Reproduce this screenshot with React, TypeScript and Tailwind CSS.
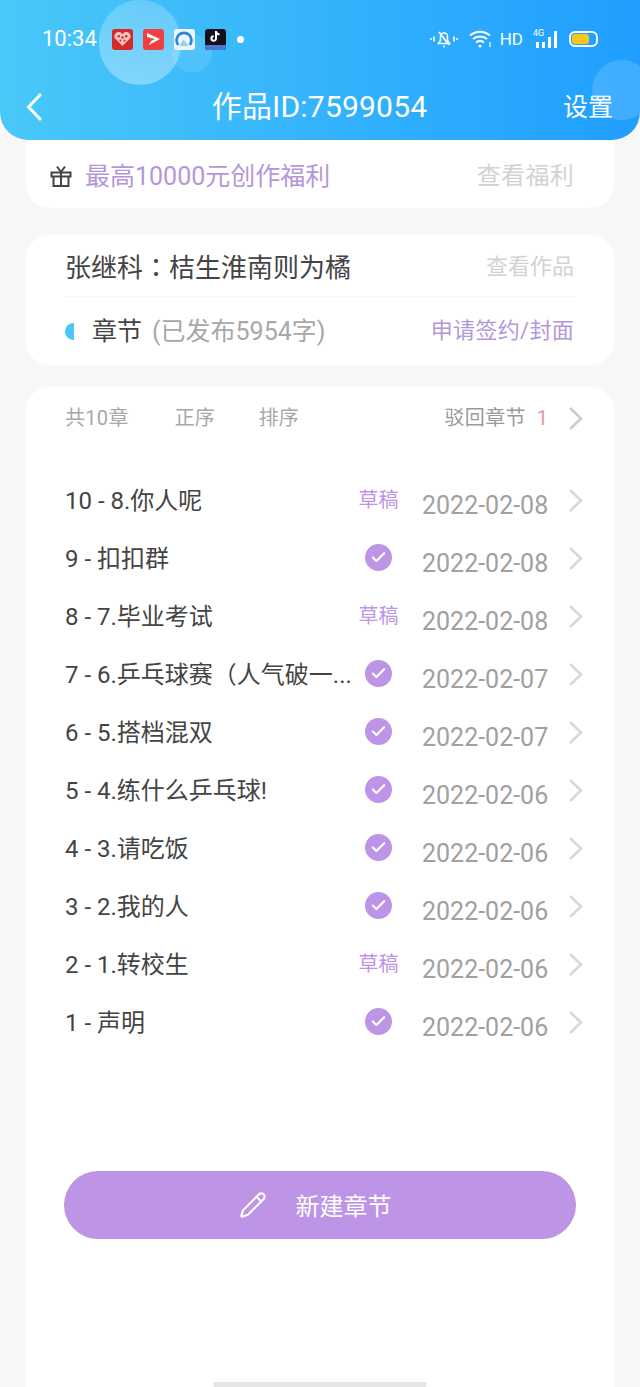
import { Check, Pencil } from "lucide-react";

const cjk = "font-['Roboto','Noto_Sans_CJK_SC',sans-serif]";

const chapters = [
  { title: "10 - 8.你人呢", draft: true, date: "2022-02-08" },
  { title: "9 - 扣扣群", draft: false, date: "2022-02-08" },
  { title: "8 - 7.毕业考试", draft: true, date: "2022-02-08" },
  { title: "7 - 6.乒乓球赛（人气破一...", draft: false, date: "2022-02-07" },
  { title: "6 - 5.搭档混双", draft: false, date: "2022-02-07" },
  { title: "5 - 4.练什么乒乓球!", draft: false, date: "2022-02-06" },
  { title: "4 - 3.请吃饭", draft: false, date: "2022-02-06" },
  { title: "3 - 2.我的人", draft: false, date: "2022-02-06" },
  { title: "2 - 1.转校生", draft: true, date: "2022-02-06" },
  { title: "1 - 声明", draft: false, date: "2022-02-06" },
];

const Arrow = ({ className }: { className: string }) => (
  <svg width="15" height="25" viewBox="0 0 15 25" fill="none" stroke="currentColor" strokeWidth="2.6" className={className}>
    <path d="M2 2l11 10.500L2 23" />
  </svg>
);

const GiftIcon = () => (
  <svg width="22" height="24" viewBox="0 0 22 24" fill="none" stroke="#444444" strokeWidth="2" className="shrink-0">
    <path d="M1.500 8.500h19v4h-19zM3.500 12.500v9.500h15v-9.500M11 8.500V22" />
    <path d="M11 8L7 2.500M11 8l4-5.500" />
  </svg>
);

const StatusIcons = () => (
  <div className="flex items-center gap-[11px] text-white">
    {/* muted bell */}
    <svg width="28" height="18" viewBox="0 0 28 18" fill="none" stroke="currentColor" strokeWidth="1.600">
      <path d="M1 8v2M4 6.500v5M24 6.500v5M27 8v2" />
      <path d="M8.500 13.500h11l-2-3V6.500a3.500 3.500 0 0 0-7 0v4z" />
      <path d="M9 2l10 13M13 16.500h2" />
    </svg>
    {/* wifi */}
    <svg width="24" height="18" viewBox="0 0 24 18" fill="none" stroke="currentColor" strokeWidth="2">
      <path d="M1 5.500c6-5 14-5 20 0M4 9c4-3.300 10-3.300 14 0M7 12.500c2.500-2 5.500-2 8 0" />
      <circle cx="11" cy="16" r="1.500" fill="currentColor" stroke="none" />
      <path d="M21 12v5" strokeWidth="1.200" />
    </svg>
    <span className="font-['Roboto',sans-serif] text-[17px] leading-none -ml-[4px]">HD</span>
    <div className="relative flex items-end gap-[3px] h-[18px] w-[26px] -ml-[1px]">
      <span className="absolute -top-[1px] left-0 text-[9px] leading-none font-['Roboto',sans-serif]">4G</span>
      <span className="w-[3px] h-[6px] bg-white ml-[3px]" />
      <span className="w-[3px] h-[6px] bg-white" />
      <span className="w-[3px] h-[11px] bg-white" />
      <span className="w-[3px] h-[17px] bg-white" />
    </div>
    <div className="flex items-center h-[16px] w-[29px] rounded-[6px] border-2 border-white p-[1px] -ml-[1px]">
      <div className="h-full w-[17px] rounded-[3px] bg-[#f7c51e]" />
    </div>
  </div>
);

const AppIcons = () => (
  <div className="flex items-center gap-[10px]">
    <div className="w-[21px] h-[21px] rounded-[3px] bg-[#d32a2a] flex items-center justify-center">
      <svg width="17" height="16" viewBox="0 0 16 15" fill="#f6c7c0">
        <path d="M8 14L1.500 7.500a3.800 3.800 0 0 1 0-5.200 3.800 3.800 0 0 1 6.500 1 3.800 3.800 0 0 1 6.500-1 3.800 3.800 0 0 1 0 5.200z" />
        <circle cx="4.500" cy="5" r="1.200" fill="#d32a2a" />
        <circle cx="8" cy="6" r="1.200" fill="#d32a2a" />
        <circle cx="11.500" cy="5" r="1.200" fill="#d32a2a" />
        <circle cx="6" cy="9" r="1" fill="#d32a2a" />
        <circle cx="10" cy="9" r="1" fill="#d32a2a" />
      </svg>
    </div>
    <div className="w-[21px] h-[21px] rounded-[3px] bg-[#ee3f42] flex items-center justify-center">
      <svg width="14" height="12" viewBox="0 0 14 12" fill="white">
        <path d="M1 0l13 6-11 6 2-4 4-2-8-2z" />
      </svg>
    </div>
    <div className="w-[21px] h-[21px] rounded-[3px] bg-[#eef6fb] flex items-center justify-center">
      <svg width="18" height="18" viewBox="0 0 17 17" fill="none">
        <path d="M3 14a7 7 0 1 1 11 0" stroke="#2a86d8" strokeWidth="2.600" />
        <path d="M4 15l4-6 5 6z" fill="#9ccdf0" />
      </svg>
    </div>
    <div className="w-[21px] h-[21px] rounded-[3px] bg-[#14101c] flex flex-col items-center overflow-hidden">
      <svg width="13" height="15" viewBox="0 0 13 15" fill="none" stroke="white" strokeWidth="2">
        <path d="M7 2v7.500a2.300 2.300 0 1 1-2.300-2.300M7 2.500c.5 1.800 1.800 2.800 3.500 3" />
      </svg>
      <div className="w-full h-[5px] bg-[#4a78d0] mt-auto" />
    </div>
    <div className="w-[7px] h-[7px] rounded-full bg-white ml-[1px]" />
  </div>
);

const Header = () => (
  <header className="relative overflow-hidden h-[140px] rounded-b-[28px] bg-gradient-to-r from-[#49c8f8] to-[#1f9eff] shrink-0">
    {/* decorative bubbles */}
    <div className="absolute left-[99px] top-0 w-[82px] h-[85px] rounded-full bg-gradient-to-b from-white/20 to-white/35" />
    <div className="absolute left-[172px] top-[35px] w-[40px] h-[37px] rounded-full bg-white/10" />
    <div className="absolute left-[592px] top-[60px] w-[60px] h-[60px] rounded-full bg-white/15" />
    <div className="relative flex items-center justify-between h-[78px] pl-[42px] pr-[42px]">
      <div className="flex items-center gap-[15px]">
        <span className="font-['Roboto',sans-serif] text-[22px] leading-none text-white">10:34</span>
        <AppIcons />
      </div>
      <StatusIcons />
    </div>
    <div className="relative grid grid-cols-[1fr_auto_1fr] items-center h-[58px] pl-[26px] pr-[27px]">
      <svg width="17" height="30" viewBox="0 0 17 30" fill="none" stroke="white" strokeWidth="3">
        <path d="M15 2L2.500 15 15 28" />
      </svg>
      <h1 className={`${cjk} text-[30px] tracking-[0.2px] leading-none text-white font-normal`}>作品ID:7599054</h1>
      <span className={`${cjk} text-[25px] leading-none text-white justify-self-end`}>设置</span>
    </div>
  </header>
);

export default function App() {
  return (
    <div className={`${cjk} w-[640px] h-[1387px] bg-[#f8f8f8] flex flex-col relative overflow-hidden`}>
      <Header />
      <div className="flex flex-col flex-1 mx-[26px]">
        {/* welfare banner */}
        <div className="h-[68px] bg-white rounded-b-[24px] flex items-center justify-between pl-[24px] pr-[40px] pt-[4px] shrink-0">
          <div className="flex items-center gap-[13px]">
            <GiftIcon />
            <span className="text-[25px] leading-none text-[#b497d8]">最高10000元创作福利</span>
          </div>
          <span className="text-[24px] leading-none text-[#d2d2d2] tracking-[0.3px]">查看福利</span>
        </div>

        {/* book info */}
        <div className="mt-[27px] h-[130px] bg-white rounded-[24px] px-[40px] flex flex-col shrink-0">
          <div className="h-[62px] pt-[2px] flex items-center justify-between border-b border-[#f7f7f7]">
            <span className="text-[26px] leading-none text-[#444444] -ml-[1px]">
              张继科<span className="font-['Noto_Sans_CJK_TC',sans-serif]">：</span>桔生淮南则为橘
            </span>
            <span className="text-[22px] leading-none text-[#d2d2d2]">查看作品</span>
          </div>
          <div className="flex-1 flex items-center justify-between">
            <div className="flex items-center">
              <div className="w-[9px] h-[17px] -ml-[1px] rounded-l-full bg-[#49c8f8]" />
              <span className="ml-[18px] text-[25px] leading-none text-[#444444]">章节</span>
              <span className="ml-[10px] text-[25px] leading-none text-[#a8a8a8]">(已发布5954字)</span>
            </div>
            <span className="text-[22px] leading-none text-[#b497d8] tracking-[0.3px]">申请签约/封面</span>
          </div>
        </div>

        {/* chapter list */}
        <div className="mt-[22px] flex-1 bg-white rounded-t-[24px] pl-[39px] pr-[30px] flex flex-col">
          <div className="h-[62px] flex items-center text-[20px] text-[#a8a8a8] whitespace-nowrap">
            <span className="leading-none tracking-[0.3px]">共10章</span>
            <span className="leading-none ml-[46px]">正序</span>
            <span className="leading-none ml-[44px]">排序</span>
            <span className="leading-none ml-auto mr-[2px] text-[#9a9a9a] tracking-[0.3px]">驳回章节</span>
            <span className="leading-none ml-[9px] text-[#e59a9a]">1</span>
            <Arrow className="ml-[20px] mr-[1px] shrink-0 text-[#cccccc]" />
          </div>
          <div className="mt-[22px] flex flex-col">
            {chapters.map((c) => (
              <div key={c.title} className="h-[58px] flex items-center pt-[1px]">
                <span className="w-[294px] shrink-0 text-[24px] leading-none text-[#444444] whitespace-nowrap">{c.title}</span>
                <div className="w-[40px] shrink-0 flex justify-center -mt-[2px]">
                  {c.draft ? (
                    <span className="text-[20px] leading-none text-[#bd94e6] whitespace-nowrap -ml-[1px]">草稿</span>
                  ) : (
                    <span className="w-[27px] h-[27px] rounded-full bg-[#bd94e6] flex items-center justify-center shrink-0 -ml-[1px]">
                      <Check className="w-[17px] h-[17px] text-white" strokeWidth={3} />
                    </span>
                  )}
                </div>
                <span className="ml-[23px] w-[127px] shrink-0 mt-[10px] font-['Roboto',sans-serif] text-[25px] leading-none text-[#a0a0a0] whitespace-nowrap">{c.date}</span>
                <Arrow className="ml-[19px] shrink-0 text-[#d8d8d8]" />
              </div>
            ))}
          </div>
          <button className="mt-[120px] -ml-[1px] w-[512px] h-[68px] rounded-full bg-[#bd94e6] flex items-center justify-center text-white shrink-0">
            <Pencil className="w-[28px] h-[28px] -ml-[10px]" strokeWidth={1.8} />
            <span className="ml-[29px] mt-[3px] text-[24px] leading-none">新建章节</span>
          </button>
        </div>
      </div>
      {/* home indicator */}
      <div className="absolute bottom-0 left-[213px] w-[214px] h-[5px] rounded-full bg-[#e6e6e6]" />
    </div>
  );
}
